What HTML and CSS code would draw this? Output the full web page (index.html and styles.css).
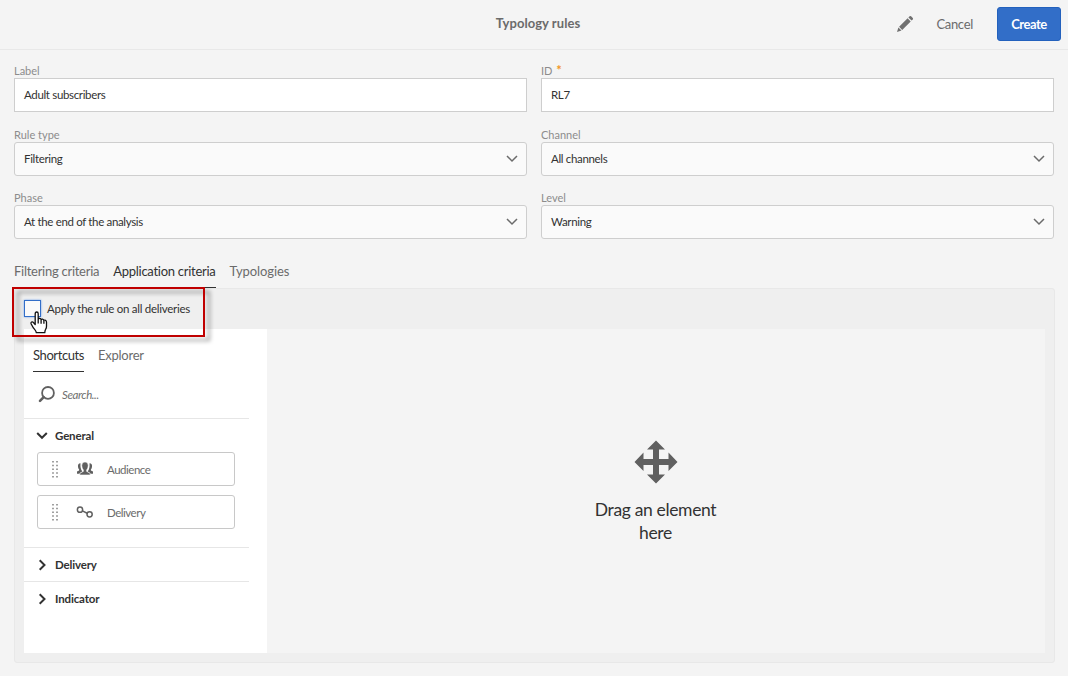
FILE: index.html
```html
<!DOCTYPE html>
<html lang="en">
<head>
<meta charset="utf-8">
<title>Typology rules</title>
<link rel="stylesheet" href="styles.css">
</head>
<body>
<header class="header">
  <h1 class="title">Typology rules</h1>
  <div class="actions">
    <svg class="pencil" width="18" height="18" viewBox="0 0 18 18"><path d="M1 17l1.4-4.5 3.1 3.1zM3.1 11.7L11.6 3.3l3.1 3.1-8.5 8.5zM12.4 2.5l1.2-1.2q.7-.6 1.5 0l1.700 1.700q.6.700 0 1.400l-1.200 1.200z" fill="#707070"/></svg>
    <span class="cancel">Cancel</span>
    <button class="create">Create</button>
  </div>
</header>
<main class="main">
  <section class="form">
    <div class="field"><label class="label">Label</label><div class="input">Adult subscribers</div></div>
    <div class="field"><label class="label">ID <span class="star">*</span></label><div class="input">RL7</div></div>
    <div class="field"><label class="label">Rule type</label><div class="input select">Filtering<svg class="chev" width="12" height="8" viewBox="0 0 12 8"><path d="M1 1l5 5 5-5"/></svg></div></div>
    <div class="field"><label class="label">Channel</label><div class="input select">All channels<svg class="chev" width="12" height="8" viewBox="0 0 12 8"><path d="M1 1l5 5 5-5"/></svg></div></div>
    <div class="field"><label class="label">Phase</label><div class="input select">At the end of the analysis<svg class="chev" width="12" height="8" viewBox="0 0 12 8"><path d="M1 1l5 5 5-5"/></svg></div></div>
    <div class="field"><label class="label">Level</label><div class="input select">Warning<svg class="chev" width="12" height="8" viewBox="0 0 12 8"><path d="M1 1l5 5 5-5"/></svg></div></div>
  </section>
  <nav class="tabs">
    <span class="tab">Filtering criteria</span>
    <span class="tab active">Application criteria</span>
    <span class="tab last">Typologies</span>
  </nav>
  <section class="panel">
    <div class="apply"><span class="checkbox"></span><span class="apply-text">Apply the rule on all deliveries</span></div>
    <div class="workspace">
      <aside class="palette">
        <nav class="subtabs"><span class="tab active">Shortcuts</span><span class="tab">Explorer</span></nav>
        <div class="search">
          <svg width="17" height="17" viewBox="0 0 17 17"><circle cx="10" cy="6.900" r="5.900" fill="none" stroke="#606060" stroke-width="1.800"/><path d="M5.700 11.200l-3.700 3.700" stroke="#606060" stroke-width="2.600" stroke-linecap="round"/></svg>
          <span class="placeholder">Search...</span>
        </div>
        <div class="group general">
          <div class="group-head"><svg width="12" height="12" viewBox="0 0 12 12"><path d="M1.200 3L6 7.800 10.800 3"/></svg>General</div>
          <div class="item">
            <svg class="grip" width="8" height="18" viewBox="0 0 8 18"><path d="M2 1v17M6 1v17" stroke="#a0a0a0" stroke-width="2" stroke-dasharray="1.600 2.150"/></svg>
            <svg class="item-icon" width="18" height="16" viewBox="0 0 18 16" fill="#606060"><path d="M4.500 2.200Q1.500 2.400 2 6q.3 1.800 1.100 2.500v.9L1 10.600v2.200h2.600q.3-1.400 2.800-2.200Q4 7.500 4.500 2.200zM13.500 2.200q3 .2 2.500 3.800-.3 1.800-1.100 2.500v.9l2.100 1.200v2.200h-2.600q-.3-1.400-2.800-2.200 2.400-3.100 1.900-8.400z"/><path d="M9 1q3.300 0 3.200 3.700-.2 3-1.600 4.200v1.500l3.100 1.600q.5.500.5 1.900H3.800q0-1.400.5-1.900l3.100-1.600V8.900Q6 7.700 5.800 4.700 5.700 1 9 1z" stroke="#fff" stroke-width=".5"/></svg>
            <span class="item-text">Audience</span>
          </div>
          <div class="item">
            <svg class="grip" width="8" height="18" viewBox="0 0 8 18"><path d="M2 1v17M6 1v17" stroke="#a0a0a0" stroke-width="2" stroke-dasharray="1.600 2.150"/></svg>
            <svg class="item-icon" width="18" height="16" viewBox="0 0 18 16" fill="none" stroke="#606060" stroke-width="1.500"><circle cx="4" cy="5.700" r="2.600"/><circle cx="13.600" cy="10.300" r="2.600"/><path d="M6.400 6.900l4.800 2.300"/></svg>
            <span class="item-text">Delivery</span>
          </div>
        </div>
        <div class="group"><div class="group-head"><svg width="12" height="12" viewBox="0 0 12 12"><path d="M3.700 1.200L8.500 6l-4.800 4.800"/></svg>Delivery</div></div>
        <div class="group"><div class="group-head"><svg width="12" height="12" viewBox="0 0 12 12"><path d="M3.700 1.200L8.500 6l-4.800 4.800"/></svg>Indicator</div></div>
      </aside>
      <div class="drop">
        <svg width="44" height="44" viewBox="0 0 44 44"><path d="M22 .5l9 9h-6V19h9.500v-6.500l9 9.500-9 9v-6H25v9.500h6l-9 9-9-9h6V25H9.500v6l-9-9 9-9.500V19H19V9.500h-6z" fill="#606060"/></svg>
        <p class="drop-text">Drag an element<br>here</p>
      </div>
    </div>
  </section>
</main>
<div class="highlight"></div>
<svg class="cursor" width="18" height="23" viewBox="0 0 18 23"><path d="M5.200 13.500V2.700q0-1.700 1.500-1.700t1.500 1.700v5.500q.3-.9 1.500-.8 1.200.2 1.400 1.300.3-.8 1.400-.6 1.200.2 1.300 1.400.4-.6 1.300-.4 1.400.4 1.400 1.900v4.200q0 1.800-.9 3.200-.7 1-.8 3.300H6.300q-.2-1.700-1.500-3.100Q3 16.700 1.200 13q-.6-1.500.4-2 1-.5 2 .7zM8.200 8v4.500M11.100 9v3.700M13.900 10v2.700" fill="#fff" stroke="#111" stroke-width="1.300" stroke-linejoin="round"/></svg>
</body>
</html>
```
FILE: styles.css
```css
* { box-sizing: border-box; }
body { margin: 0; width: 1068px; height: 676px; overflow: hidden; position: relative; background: #f4f4f4; color: #323232; font-family: Lato, "Noto Sans", sans-serif; font-size: 11.5px; }
.header { height: 50px; border-bottom: 1px solid #e8e8e8; display: grid; grid-template-columns: 1fr auto 1fr; padding: 0 7px 0 15px; align-items: center; }
.title { grid-column: 2; margin: 0 0 4px; font-size: 13px; font-weight: 700; color: #6b6b6b; line-height: 18px; letter-spacing: .05px; }
.actions { display: flex; align-items: center; justify-content: flex-end; }
.pencil { margin-right: 22px; margin-bottom: 1px; }
.cancel { font-size: 13px; color: #6b6b6b; margin-right: 24px; margin-bottom: 2px; letter-spacing: -.3px; }
.create { width: 64px; height: 34px; margin: 0 0 1px; padding: 0; border: 1px solid #2361bd; border-radius: 3px; background: #326ec8; color: #fff; font: 700 13px Lato, sans-serif; letter-spacing: -.45px; }
.main { padding: 14px 13px 0 14px; }
.form { display: grid; grid-template-columns: 513px 513px; column-gap: 14px; grid-template-rows: 64px 63px 62px; }
.label { display: block; height: 14px; line-height: 14px; color: #8c8c8c; font-size: 11px; }
.star { color: #f29423; margin-left: 1px; font-size: 13px; line-height: 10px; font-weight: 700; }
.input { height: 34px; border: 1px solid #cecece; background: #fff; padding: 0 9px 2px; display: flex; align-items: center; letter-spacing: -.34px; }
.select { background: #fafafa; border-radius: 3px; justify-content: space-between; padding-right: 8px; }
.chev { fill: none; stroke: #6b6b6b; stroke-width: 1.5; position: relative; top: 1px; }
.tabs { display: flex; gap: 14px; height: 35px; }
.tab { font-size: 13px; color: #6b6b6b; line-height: 37px; height: 35px; white-space: nowrap; letter-spacing: -.27px; }
.tab.active { color: #323232; border-bottom: 1px solid #323232; }
.tab.last { letter-spacing: -.1px; }
.panel { height: 375px; border: 1px solid #e8e8e8; border-radius: 3px; background: #efefef; padding: 0 9px; }
.apply { height: 40px; display: flex; align-items: center; gap: 6px; padding-bottom: 2px; letter-spacing: -.27px; }
.checkbox { width: 17px; height: 17px; background: #fafafa; border: 1px solid #326ec8; box-shadow: 0 0 2px #6f9fe8; }
.workspace { display: flex; height: 324px; background: #f4f4f4; }
.palette { width: 243px; background: #fff; padding-right: 18px; }
.subtabs { display: flex; gap: 14px; height: 43px; padding-left: 9px; }
.subtabs .tab { line-height: 53px; height: 43px; }
.subtabs .active { letter-spacing: -.4px; }
.search { height: 46px; padding-left: 14px; padding-bottom: 1px; display: flex; align-items: center; gap: 7px; }
.placeholder { font-style: italic; color: #707070; letter-spacing: -.4px; }
.group { border-top: 1px solid #e6e6e6; height: 34px; }
.general { height: 129px; }
.group-head { height: 33px; display: flex; align-items: center; gap: 7px; padding-left: 12px; font-weight: 700; letter-spacing: -.15px; }
.group-head svg { fill: none; stroke: #323232; stroke-width: 2; }
.item { height: 34px; margin: 0 14px 9px 13px; border: 1px solid #c8c8c8; border-radius: 3px; display: flex; align-items: center; color: #6b6b6b; letter-spacing: -.48px; }
.grip { margin-left: 13px; }
.item-icon { margin-left: 17px; margin-right: 13px; }
.drop { flex: 1; display: flex; flex-direction: column; align-items: center; padding: 111px 1px 0 0; }
.drop-text { margin: 14px 0 0; text-align: center; font-size: 17.5px; line-height: 23px; letter-spacing: -.35px; }
.highlight { position: absolute; left: 12px; top: 287px; width: 193px; height: 50px; border: 2px solid #c00000; filter: drop-shadow(5px 4px 2px rgba(0,0,0,.4)); }
.cursor { position: absolute; left: 30px; top: 311px; }
```
